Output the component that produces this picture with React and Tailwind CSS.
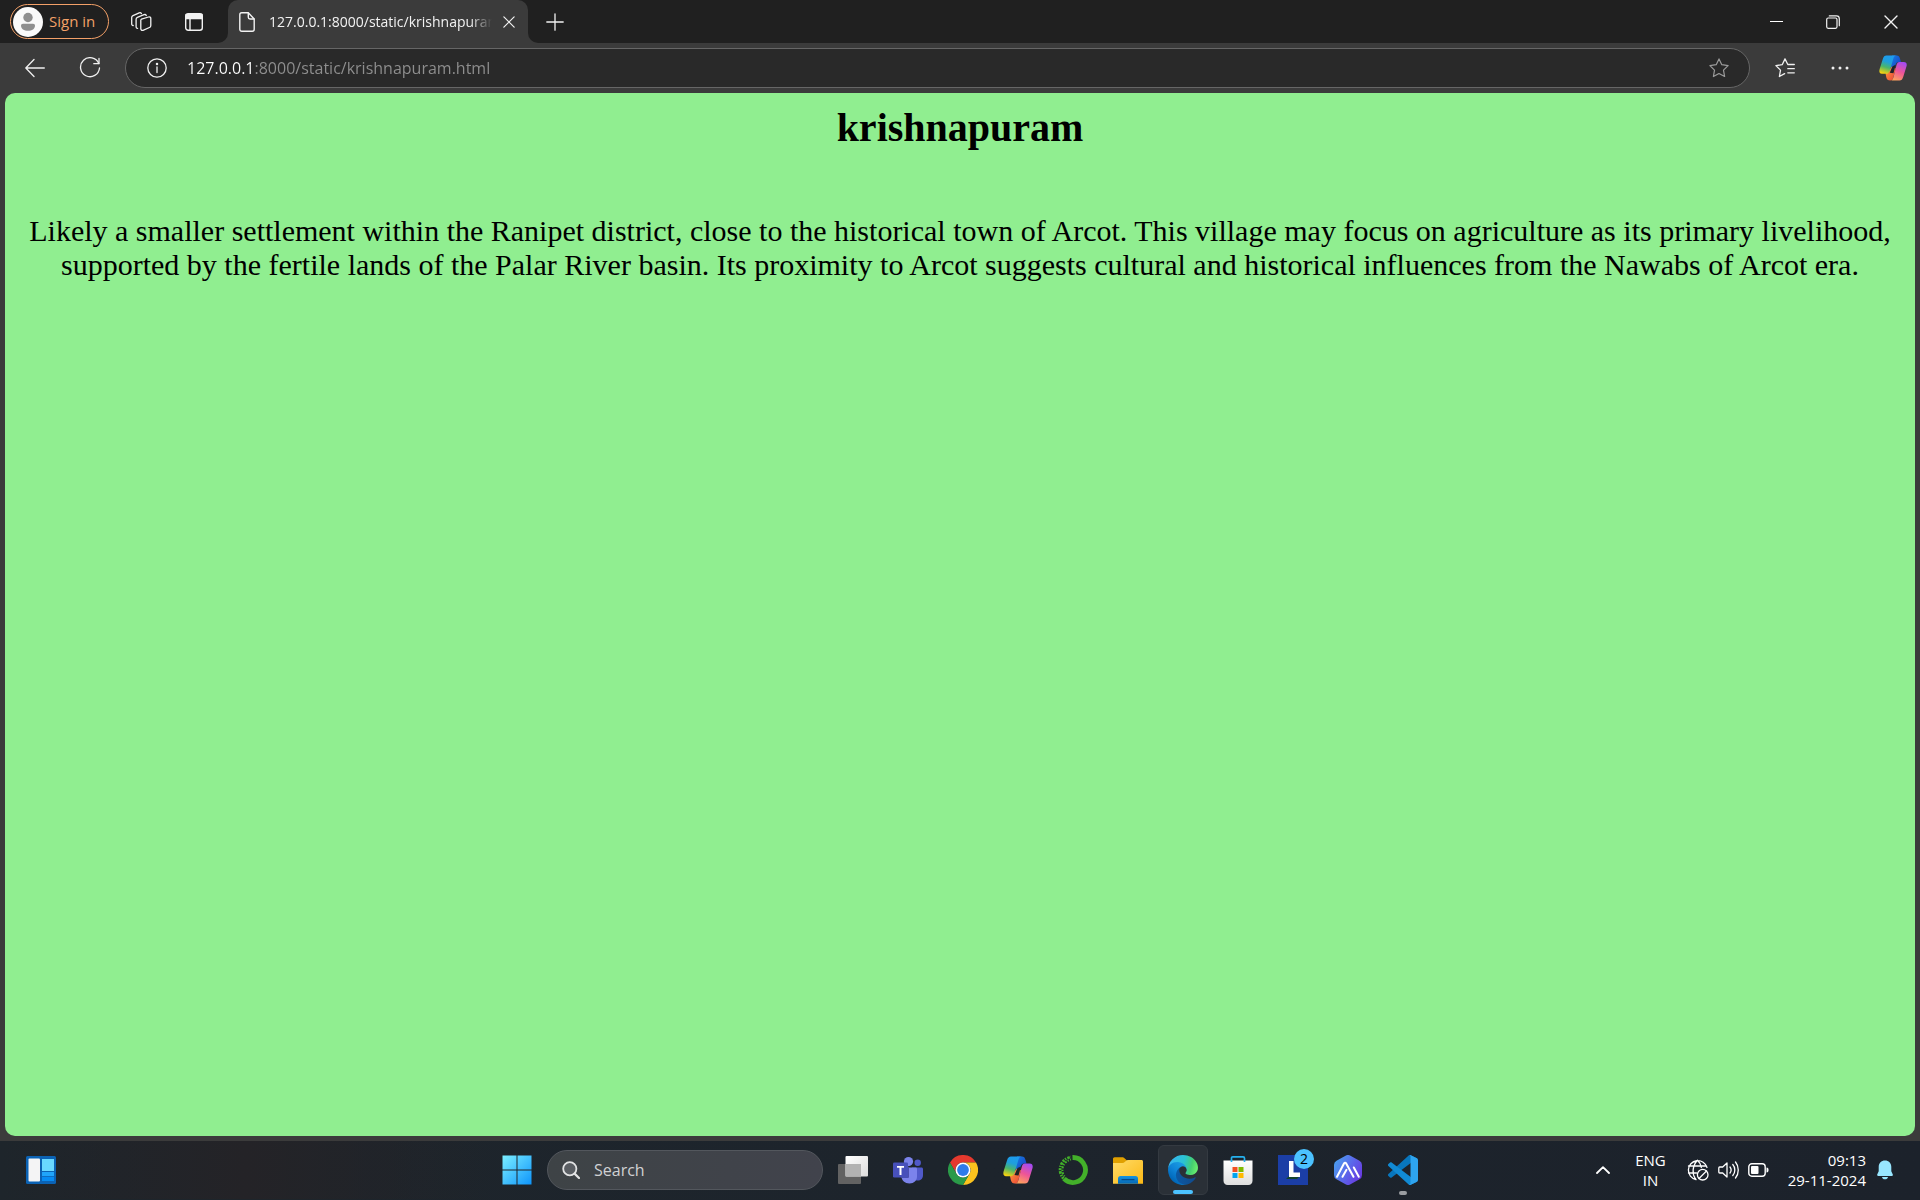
import React from "react";

const line = {
  fill: "none",
  stroke: "currentColor",
  strokeLinecap: "round",
  strokeLinejoin: "round",
};

/* ---------- browser icons ---------- */

function Avatar() {
  return (
    <svg className="size-[30px] shrink-0" viewBox="0 0 30 30" aria-hidden="true">
      <circle cx="15" cy="15" r="15" fill="#fafafa" />
      <circle cx="15" cy="10.5" r="4.7" fill="#8f8f8f" />
      <path d="M10 16.7h10c1.300 0 2 .9 2 2 0 3.100-3 5-7 5s-7-1.900-7-5c0-1.100.7-2 2-2Z" fill="#8f8f8f" />
    </svg>
  );
}

function WorkspacesIcon() {
  return (
    <svg className="size-[22px]" viewBox="0 0 22 22" strokeWidth="1.3" aria-hidden="true" {...line}>
      <path d="M11.500 8.200 18.500 6c1.200-.4 2.300.3 2.300 1.500v7c0 1-.5 1.700-1.400 2L13 19.300c-1.200.4-2.200-.3-2.200-1.500V9.300c0-.5.2-.9.700-1.100Z" />
      <path d="M7.600 17.300c-1 .1-1.500-.6-1.500-1.500V8.200c0-.9.400-1.500 1.300-1.900l6.600-2.600c1-.4 1.900 0 2.300.8" />
      <path d="M3.200 14.500c-.9.100-1.500-.6-1.500-1.500V6.500c0-.9.400-1.500 1.300-1.900l6.200-2.700c.9-.4 1.800 0 2.200.7" />
    </svg>
  );
}

function TabActionsIcon() {
  return (
    <svg className="size-5" viewBox="0 0 20 20" strokeWidth="1.400" aria-hidden="true" {...line}>
      <rect x="1.700" y="1.700" width="16.600" height="16.600" rx="2.500" />
      <path d="M2 2.500h16v4H2z" fill="currentColor" />
      <path d="M6 7v11" />
    </svg>
  );
}

function PageIcon() {
  return (
    <svg className="h-5 w-4 shrink-0" viewBox="0 0 16 20" strokeWidth="1.400" aria-hidden="true" {...line}>
      <path d="M2.700.8h6.600L15.200 7v10.300c0 1-.8 1.900-1.900 1.900H2.700c-1 0-1.900-.8-1.900-1.900V2.700C.8 1.600 1.600.8 2.700.8Z" />
      <path d="M9.300 1v4.300c0 1 .6 1.700 1.700 1.700h4" />
    </svg>
  );
}

function XIcon({ className }) {
  return (
    <svg className={className} viewBox="0 0 14 14" strokeWidth="1.400" aria-hidden="true" {...line}>
      <path d="m1 1 12 12M13 1 1 13" />
    </svg>
  );
}

function PlusIcon() {
  return (
    <svg className="size-[18px]" viewBox="0 0 18 18" strokeWidth="1.300" aria-hidden="true" {...line}>
      <path d="M9 .8v16.400M.8 9h16.400" />
    </svg>
  );
}

function RestoreIcon() {
  return (
    <svg className="size-[14px]" viewBox="0 0 14 14" strokeWidth="1.200" aria-hidden="true" {...line}>
      <rect x=".7" y="3" width="10.300" height="10.300" rx="1.500" />
      <path d="M3.300.9h7.200c1.700 0 2.800 1.100 2.800 2.800v7" />
    </svg>
  );
}

function BackIcon() {
  return (
    <svg className="size-5" viewBox="0 0 20 20" strokeWidth="1.300" aria-hidden="true" {...line}>
      <path d="M19.300 10H.8M9 1.500.8 10 9 18.500" />
    </svg>
  );
}

function ReloadIcon() {
  return (
    <svg className="size-[22px]" viewBox="0 0 22 22" strokeWidth="1.300" aria-hidden="true" {...line}>
      <path d="M19.800 6.500A9.500 9.500 0 1 0 20.500 11" />
      <path d="M20 1.500v5.200h-5.200" />
    </svg>
  );
}

function InfoIcon() {
  return (
    <svg className="size-5" viewBox="0 0 20 20" strokeWidth="1.300" aria-hidden="true" {...line}>
      <circle cx="10" cy="10" r="9.200" />
      <path d="M10 9v5.500" />
      <circle cx="10" cy="6" r=".6" fill="currentColor" />
    </svg>
  );
}

function StarIcon() {
  return (
    <svg className="size-5" viewBox="0 0 20 20" strokeWidth="1.200" aria-hidden="true" {...line}>
      <path d="m10 .9 2.800 5.800 6.300.9-4.600 4.500 1.100 6.400-5.600-3-5.600 3 1.100-6.400L.9 7.600l6.300-.9Z" />
    </svg>
  );
}

function FavoritesIcon() {
  return (
    <svg className="size-5" viewBox="0 0 20 20" strokeWidth="1.300" aria-hidden="true" {...line}>
      <path d="M19.300 6.500h-6.500L10 .9 7.200 6.700l-6.300.9 4.600 4.500-1.100 6.400 5.200-2.900M12.800 10.700h6.500M12.800 14.800h6.500" />
    </svg>
  );
}

function DotsIcon() {
  return (
    <svg className="h-1 w-[18px]" viewBox="0 0 18 4" fill="currentColor" aria-hidden="true">
      <circle cx="2" cy="2" r="1.500" />
      <circle cx="9" cy="2" r="1.500" />
      <circle cx="16" cy="2" r="1.500" />
    </svg>
  );
}

function CopilotLogo({ id, className }) {
  return (
    <svg className={className} viewBox="0 0 30 29" aria-hidden="true">
      <defs>
        <linearGradient id={`${id}-a`} x1=".6" y1="0" x2=".3" y2="1">
          <stop offset="0" stopColor="#1d9bf0" />
          <stop offset=".35" stopColor="#1f9fdc" />
          <stop offset=".65" stopColor="#4bb66a" />
          <stop offset="1" stopColor="#f6d20f" />
        </linearGradient>
        <linearGradient id={`${id}-b`} x1=".7" y1="0" x2=".3" y2="1">
          <stop offset="0" stopColor="#a44bf2" />
          <stop offset=".5" stopColor="#ee5597" />
          <stop offset="1" stopColor="#ffa35c" />
        </linearGradient>
        <linearGradient id={`${id}-c`} x1="0" y1="0" x2="1" y2="1">
          <stop offset="0" stopColor="#1a7fe0" />
          <stop offset="1" stopColor="#1437c4" />
        </linearGradient>
        <linearGradient id={`${id}-d`} x1="0" y1="0" x2="1" y2="1">
          <stop offset="0" stopColor="#ffa13c" />
          <stop offset="1" stopColor="#ea3e38" />
        </linearGradient>
      </defs>
      <path d="M14 1h5c2 0 2.800 1 3.500 3.500l1 3.500H21c-1.700 0-2.600 1-3.200 3L16 17l-3.500-3Z" fill={`url(#${id}-c)`} />
      <path d="M7 20.500 14 13l4 2-2.500 9c-.7 3-1.500 4-3.500 4-2.500 0-3.500-1-4.200-3.500Z" fill={`url(#${id}-d)`} />
      <path d="M14.500 12.500 18 11l-2.500 9-4-.5Z" fill="#1f2229" />
      <path d="M8 1h11c-2 0-3 1-3.700 3.500L12 16c-1 3.300-2 4.700-4.500 4.700H3C.4 20.700-.1 18.500.7 15.500L4 5c.9-3 2-4 4-4Z" fill={`url(#${id}-a)`} />
      <path d="M22 8h4.500c3 0 3.700 2 2.900 5L26 24c-1 3-2 4-4 4H12c2 0 2.800-1.200 3.500-3.700l3.300-13C19.500 9 20.200 8 22 8Z" fill={`url(#${id}-b)`} />
    </svg>
  );
}

/* ---------- taskbar icons ---------- */

function WidgetsIcon() {
  return (
    <svg className="h-7 w-[30px]" viewBox="0 0 30 28" aria-hidden="true">
      <rect width="30" height="28" rx="1.500" fill="#0b62b4" />
      <rect x="2.500" y="2.500" width="11.500" height="23" rx="1" fill="#f4f4f5" />
      <path d="M16 3h12v12H16z" fill="#69d8ff" />
      <path d="M16 16h12v4.200H16z" fill="#20a5fa" />
      <path d="M16 21h12v4H16z" fill="#078bf2" />
    </svg>
  );
}

function StartIcon() {
  return (
    <svg className="size-[30px]" viewBox="0 0 30 30" aria-hidden="true">
      <defs>
        <linearGradient id="start" gradientUnits="userSpaceOnUse" x1="0" y1="0" x2="30" y2="30">
          <stop offset="0" stopColor="#7df0ff" />
          <stop offset="1" stopColor="#0c93fb" />
        </linearGradient>
      </defs>
      <path d="M.5.500h14v14H.5zM15.500.500h14v14h-14zM.5 15.500h14v14H.5zM15.500 15.500h14v14h-14z" fill="url(#start)" />
    </svg>
  );
}

function SearchIcon() {
  return (
    <svg className="size-[18px] text-[#e2e3e4]" viewBox="0 0 18 18" aria-hidden="true">
      <circle cx="7.800" cy="7.800" r="6.600" fill="#5a5e63" stroke="currentColor" strokeWidth="1.800" />
      <path d="m12.600 12.600 4.400 4.400" stroke="currentColor" strokeWidth="2.200" strokeLinecap="round" />
    </svg>
  );
}

function TaskViewIcon() {
  return (
    <svg className="size-[30px]" viewBox="0 0 30 30" aria-hidden="true">
      <defs>
        <linearGradient id="tv" x1="0" y1="0" x2="1" y2="1">
          <stop offset="0" stopColor="#fff" />
          <stop offset="1" stopColor="#dcdcdc" />
        </linearGradient>
      </defs>
      <rect x="0" y="9" width="23" height="20" rx="1" fill="#626262" />
      <rect x="7.500" y="1" width="22.500" height="20.500" rx="1" fill="url(#tv)" />
      <path d="M7.500 9H23v12.500H7.500z" fill="#b2b2b2" />
    </svg>
  );
}

function TeamsIcon() {
  return (
    <svg className="size-[30px]" viewBox="0 0 30 30" aria-hidden="true">
      <circle cx="24.700" cy="7.700" r="3.200" fill="#5059c9" />
      <path d="M19 12.500h9.500c.9 0 1.500.6 1.500 1.500v6c0 4-2.500 5.500-5 5.500-3.500 0-5.500-2-5.500-5Z" fill="#5059c9" />
      <circle cx="15.500" cy="6.600" r="4.600" fill="#7b83eb" />
      <path d="M8 12.500h14.500c1 0 1.500.6 1.500 1.500v7.500c0 4-3 7-7.500 7S8.500 25.500 8.500 21.500Z" fill="#7b83eb" />
      <path d="M8.500 12.500H16v9c0 1-.5 1.500-1.500 1.500H8.700Z" fill="#4a50ad" />
      <rect x="0" y="7.500" width="15" height="15" rx="1.300" fill="#4750ba" />
      <path d="M4 11h7v1.700H8.500v7.300h-2v-7.300H4z" fill="#fff" />
    </svg>
  );
}

function ChromeIcon() {
  return (
    <svg className="size-[30px]" viewBox="0 0 30 30" aria-hidden="true">
      <path d="M2 7.500a15 15 0 0 1 26 0H15a7.500 7.500 0 0 0-6.500 11.250Z" fill="#e5392e" />
      <path d="M28 7.500A15 15 0 0 1 15 30l6.500-11.250A7.500 7.500 0 0 0 15 7.500Z" fill="#fcc31e" />
      <path d="M15 30A15 15 0 0 1 2 7.500l6.500 11.250a7.500 7.500 0 0 0 13 0Z" fill="#2a9a48" />
      <circle cx="15" cy="15" r="7.500" fill="#fff" />
      <circle cx="15" cy="15" r="5.900" fill="#2f7bea" />
    </svg>
  );
}

function AnacondaIcon() {
  return (
    <svg className="size-[30px]" viewBox="0 0 30 30" fill="none" stroke="#43b02a" aria-hidden="true">
      <path d="M14.500 2.500a12.500 12.500 0 1 1-8.500 21.200" strokeWidth="4.800" />
      <path d="M5.500 23.500A12.900 12.900 0 0 1 13 2" strokeWidth="2.800" strokeDasharray="2 1 1.300 1.200 2.600 1" />
      <path d="M6.500 21.500A10.700 10.700 0 0 1 13 4.600" strokeWidth="2" strokeDasharray="1.200 1.500 2 1.200" />
    </svg>
  );
}

function ExplorerIcon() {
  return (
    <svg className="size-[30px]" viewBox="0 0 30 30" aria-hidden="true">
      <defs>
        <linearGradient id="folder" x1="0" y1="0" x2="1" y2="1">
          <stop offset="0" stopColor="#ffdb68" />
          <stop offset="1" stopColor="#fbb915" />
        </linearGradient>
        <linearGradient id="tray" x1="0" y1="0" x2="0" y2="1">
          <stop offset="0" stopColor="#1593df" />
          <stop offset="1" stopColor="#0568b5" />
        </linearGradient>
      </defs>
      <path d="M0 4c0-1 .6-1.700 1.700-1.700h7.500c1 0 1.600.3 2.300 1L14 5.500l-2 4H0Z" fill="#e0a000" />
      <path d="M0 8h9.500c1 0 1.600-.3 2.200-.9l1.200-1.200c.6-.6 1.200-.9 2.100-.9h13.400c1 0 1.600.7 1.600 1.700v22H0Z" fill="url(#folder)" />
      <path d="M5 28.700v-5.200c0-1.600.9-2.500 2.500-2.500h15c1.600 0 2.500.9 2.500 2.500v5.200Z" fill="url(#tray)" />
      <path d="M9 24.700h12" stroke="#064a88" strokeWidth="1.200" strokeLinecap="round" />
    </svg>
  );
}

function EdgeIcon() {
  return (
    <svg className="size-[30px]" viewBox="0 0 256 256" aria-hidden="true">
      <defs>
        <linearGradient id="edge-a" x1="63" y1="177" x2="242" y2="177" gradientUnits="userSpaceOnUse">
          <stop offset="0" stopColor="#0c59a4" />
          <stop offset="1" stopColor="#114a8b" />
        </linearGradient>
        <linearGradient id="edge-b" x1="157" y1="100" x2="46" y2="222" gradientUnits="userSpaceOnUse">
          <stop offset="0" stopColor="#1b9de2" />
          <stop offset=".5" stopColor="#0f85d8" />
          <stop offset="1" stopColor="#0067b8" />
        </linearGradient>
        <linearGradient id="edge-c" x1="10" y1="70" x2="240" y2="130" gradientUnits="userSpaceOnUse">
          <stop offset="0" stopColor="#35b5f1" />
          <stop offset=".5" stopColor="#2bc3d2" />
          <stop offset=".8" stopColor="#45cf70" />
          <stop offset="1" stopColor="#66eb6e" />
        </linearGradient>
      </defs>
      <path fill="url(#edge-a)" d="M231 190.500c-3.400 1.800-6.900 3.400-10.500 4.700a101.500 101.500 0 0 1-35.900 6.500c-47.300 0-88.500-32.500-88.500-74.400 0-11.500 6.400-21.900 16.400-27.400-42.800 1.800-53.800 46.400-53.800 72.500 0 74 68.100 81.400 82.800 81.400 7.900 0 19.800-2.300 27-4.600l1.300-.4a128.300 128.300 0 0 0 66.600-52.800 4 4 0 0 0-5.400-5.500Z" />
      <path fill="url(#edge-b)" d="M105.700 241.400a79.200 79.200 0 0 1-22.700-21.300 80.700 80.700 0 0 1 29.500-120c3.200-1.500 8.400-4.100 15.500-4a32.400 32.400 0 0 1 25.700 13 31.900 31.900 0 0 1 6.300 18.700c0-.2 24.500-79.600-80-79.600-43.900 0-80 41.700-80 78.200a130.200 130.200 0 0 0 12.100 56 128 128 0 0 0 156.400 67 75.600 75.600 0 0 1-62.800-8Z" />
      <path fill="url(#edge-c)" d="M152.300 148.900c-.9 1-3.400 2.500-3.400 5.600 0 2.600 1.700 5.200 4.800 7.300 14.300 10 41.400 8.600 41.500 8.600 10.700 0 21.100-2.900 30.300-8.300a61.400 61.400 0 0 0 30.400-52.900c.3-22.400-8-37.300-11.300-43.900C223.500 23.900 177.700 0 128 0A128 128 0 0 0 0 126.200c.5-36.500 36.800-66 80-66 3.500 0 23.500.3 42 10.100 16.300 8.600 24.900 19 30.800 29.200 6.200 10.700 7.300 24.100 7.300 29.500 0 5.300-2.700 13.300-7.800 19.900Z" />
    </svg>
  );
}

function StoreIcon() {
  return (
    <svg className="size-[30px]" viewBox="0 0 30 30" aria-hidden="true">
      <defs>
        <linearGradient id="bag" x1="0" y1="0" x2="0" y2="1">
          <stop offset="0" stopColor="#fff" />
          <stop offset="1" stopColor="#dedede" />
        </linearGradient>
      </defs>
      <path d="M.5 5.500h29v20.300c0 2.600-1.600 4.200-4.200 4.200H4.700C2.100 30 .5 28.400.5 25.800Z" fill="url(#bag)" />
      <path d="M8.500 7V3.200c0-.9.500-1.400 1.400-1.400h10.200c.9 0 1.400.5 1.400 1.400V7" fill="none" stroke="#25b1ee" strokeWidth="1.700" />
      <path d="M9.500 12h5v5h-5z" fill="#f25022" />
      <path d="M15.500 12h5v5h-5z" fill="#7fba00" />
      <path d="M9.500 18h5v5h-5z" fill="#00a4ef" />
      <path d="M15.500 18h5v5h-5z" fill="#ffb900" />
    </svg>
  );
}

function LetterLIcon() {
  return (
    <svg className="size-[30px]" viewBox="0 0 30 30" aria-hidden="true">
      <path d="M0 0h30v30H0z" fill="#1b3ea6" />
      <path d="m11 21-3 3h11l3-3Z" fill="#14442f" />
      <path d="M11 6h4.500v11.500H22V22H11z" fill="#fff" />
    </svg>
  );
}

function HexIcon() {
  return (
    <svg className="size-[30px]" viewBox="0 0 30 30" aria-hidden="true">
      <defs>
        <linearGradient id="hex" x1="0" y1=".2" x2="1" y2=".8">
          <stop offset="0" stopColor="#4aa0ee" />
          <stop offset=".5" stopColor="#5b67ea" />
          <stop offset="1" stopColor="#6a35e0" />
        </linearGradient>
      </defs>
      <path d="M12.500.7a5 5 0 0 1 5 0l9 5.100a5 5 0 0 1 2.500 4.400v9.600a5 5 0 0 1-2.500 4.400l-9 5.100a5 5 0 0 1-5 0l-9-5.100A5 5 0 0 1 1 19.800v-9.600a5 5 0 0 1 2.500-4.400Z" fill="url(#hex)" />
      <path d="m4 21.800 7-13.300c.6-1.100 1.600-1.100 2.200 0l7.300 13.300M9.500 21.800l4-7M20.800 12.500l5 9.300" fill="none" stroke="#fff" strokeWidth="2" strokeLinecap="round" strokeLinejoin="round" />
    </svg>
  );
}

function CodeIcon() {
  return (
    <svg className="size-[30px]" viewBox="0 0 100 100" aria-hidden="true">
      <path fill="#0876bd" d="M96.460 10.800 75.860.880C73.470-.270 70.620.210 68.750 2.080L1.300 63.580c-1.820 1.660-1.820 4.510 0 6.160l5.510 5.010c1.490 1.350 3.720 1.450 5.320.240L93.360 13.370c2.730-2.070 6.640-.120 6.640 3.300v-.240c0-2.400-1.380-4.590-3.540-5.630Z" />
      <path fill="#118ad4" d="m96.460 89.200-20.600 9.920c-2.390 1.150-5.240.670-7.110-1.200L1.300 36.420c-1.820-1.660-1.820-4.510 0-6.170l5.510-5c1.490-1.350 3.720-1.450 5.320-.240l81.230 61.620c2.730 2.070 6.640.120 6.640-3.300v.240c0 2.400-1.380 4.590-3.540 5.630Z" />
      <path fill="#2ea4ef" d="M75.860 99.130c-2.390 1.150-5.240.660-7.110-1.210C71.060 100.220 75 98.590 75 95.330V4.670c0-3.260-3.940-4.890-6.250-2.590C70.620.210 73.470-.270 75.860.870l20.600 9.910c2.160 1.040 3.540 3.230 3.540 5.630v67.180c0 2.400-1.380 4.590-3.540 5.630Z" />
    </svg>
  );
}

function ChevronUpIcon() {
  return (
    <svg className="h-2 w-[14px]" viewBox="0 0 14 8" strokeWidth="1.800" aria-hidden="true" {...line}>
      <path d="m1 7 6-5.800L13 7" />
    </svg>
  );
}

function GlobeIcon() {
  return (
    <svg className="size-[22px]" viewBox="0 0 22 22" strokeWidth="1.300" aria-hidden="true" {...line}>
      <path d="M9 20.500A9.500 9.500 0 1 1 20 8.500M1.500 7h18M1.500 14h8M8.500 20C5 15 5 7 10.500 1.200 13 3.500 14 6 14.300 8.500" />
      <circle cx="15.700" cy="15.700" r="5.300" />
      <path d="m12 19.500 7.500-7.500" />
    </svg>
  );
}

function SpeakerIcon() {
  return (
    <svg className="h-[18px] w-[21px]" viewBox="0 0 21 18" strokeWidth="1.300" aria-hidden="true" {...line}>
      <path d="M1.700 6h3L9 2v14l-4.300-4h-3c-.5 0-.9-.4-.9-.9V6.900c0-.5.4-.9.900-.9ZM12 6c1.300 1.700 1.300 4.300 0 6M14.800 3.500c2.700 3 2.700 8 0 11M17.500 1c3.700 4.500 3.700 11.500 0 16" />
    </svg>
  );
}

function BatteryIcon() {
  return (
    <svg className="h-[14px] w-[21px]" viewBox="0 0 21 14" aria-hidden="true">
      <rect x=".8" y=".8" width="16.400" height="12.400" rx="3" strokeWidth="1.400" {...line} />
      <rect x="3" y="3" width="7.500" height="8" rx="1" fill="currentColor" />
      <path d="M18.500 4.500c1.600 0 2 1 2 2.500s-.4 2.500-2 2.500Z" fill="currentColor" />
    </svg>
  );
}

function BellIcon() {
  return (
    <svg className="h-5 w-4" viewBox="0 0 16 20" fill="#98e6fe" aria-hidden="true">
      <path d="M8 .5c3.700 0 6.300 2.700 6.300 6.300v4.500l1.500 3.300c.3.700-.1 1.400-.9 1.400H1.100c-.8 0-1.200-.7-.9-1.400l1.500-3.300V6.800C1.700 3.200 4.300.5 8 .5ZM5 17h6c-.3 1.500-1.400 2.300-3 2.300S5.300 18.500 5 17Z" />
    </svg>
  );
}

/* ---------- page ---------- */

const apps = [
  { name: "Task View", icon: <TaskViewIcon /> },
  { name: "Microsoft Teams", icon: <TeamsIcon /> },
  { name: "Google Chrome", icon: <ChromeIcon /> },
  { name: "Copilot", icon: <CopilotLogo id="cp-task" className="size-[30px]" /> },
  { name: "Anaconda Navigator", icon: <AnacondaIcon /> },
  { name: "File Explorer", icon: <ExplorerIcon /> },
  { name: "Microsoft Edge", icon: <EdgeIcon />, active: true },
  { name: "Microsoft Store", icon: <StoreIcon /> },
  { name: "L", icon: <LetterLIcon />, badge: "2" },
  { name: "Assistant", icon: <HexIcon /> },
  { name: "Visual Studio Code", icon: <CodeIcon />, running: true },
];

function AppButton({ app }) {
  return (
    <button
      type="button"
      aria-label={app.name}
      className={
        app.active
          ? "relative flex size-[50px] items-center justify-center rounded-md border border-[#343a41] bg-[#2a3037]"
          : "relative flex size-[50px] items-center justify-center"
      }
    >
      {app.icon}
      {app.badge && (
        <span className="absolute top-1 right-1 flex size-5 items-center justify-center rounded-full bg-[#4cc2ff] text-sm text-black">
          {app.badge}
        </span>
      )}
      {app.active && <span className="absolute bottom-0 h-1 w-5 rounded-full bg-[#4cc2ff]" />}
      {app.running && <span className="absolute bottom-0 h-1 w-2 rounded-full bg-[#9a9da1]" />}
    </button>
  );
}

function TabStrip() {
  return (
    <div className="flex h-[43px] items-center bg-[#202020] text-[#f2f2f2]">
      <button
        type="button"
        className="ml-[10px] flex h-[35px] w-[99px] items-center gap-[6px] rounded-full border border-[#f3a068] pl-[2px] text-[15px] whitespace-nowrap text-[#f3a068]"
      >
        <Avatar />
        Sign in
      </button>
      <button type="button" aria-label="Workspaces" className="ml-[21px] p-0">
        <WorkspacesIcon />
      </button>
      <button type="button" aria-label="Tab actions" className="ml-8">
        <TabActionsIcon />
      </button>
      <div className="ml-[14px] size-[10px] self-end bg-[#3b3b3b]">
        <div className="size-full rounded-br-[10px] bg-[#202020]" />
      </div>
      <div className="flex h-full w-[300px] items-center rounded-t-[10px] bg-[#3b3b3b] pl-[11px]">
        <PageIcon />
        <span className="ml-[14px] w-[223px] overflow-hidden text-sm whitespace-nowrap mask-r-from-90% mask-r-to-100%">
          127.0.0.1:8000/static/krishnapuram.html
        </span>
        <button type="button" aria-label="Close tab" className="ml-[11px]">
          <XIcon className="size-3" />
        </button>
      </div>
      <div className="size-[10px] self-end bg-[#3b3b3b]">
        <div className="size-full rounded-bl-[10px] bg-[#202020]" />
      </div>
      <button type="button" aria-label="New tab" className="ml-2">
        <PlusIcon />
      </button>
      <div className="ml-auto flex h-full items-center">
        <button type="button" aria-label="Minimize" className="flex h-full w-14 items-center justify-center">
          <span className="h-px w-[13px] bg-white" />
        </button>
        <button type="button" aria-label="Restore" className="flex h-full w-[58px] items-center justify-center">
          <RestoreIcon />
        </button>
        <button type="button" aria-label="Close" className="flex h-full w-[58px] items-center justify-center">
          <XIcon className="size-[14px]" />
        </button>
      </div>
    </div>
  );
}

function Toolbar() {
  return (
    <div className="flex h-[50px] items-center bg-[#3b3b3b] text-[#f0f0f0]">
      <button type="button" aria-label="Back" className="ml-[25px]">
        <BackIcon />
      </button>
      <button type="button" aria-label="Refresh" className="ml-[34px]">
        <ReloadIcon />
      </button>
      <div className="ml-6 flex h-10 flex-1 items-center rounded-full border border-[#666] bg-[#292929] pr-5 pl-[21px]">
        <button type="button" aria-label="Site information">
          <InfoIcon />
        </button>
        <input
          type="text"
          aria-label="Address"
          defaultValue="127.0.0.1:8000/static/krishnapuram.html"
          className="ml-5 min-w-0 flex-1 bg-linear-to-r from-white from-[67px] to-[#8f8f8f] to-[67px] bg-clip-text text-base text-transparent outline-none"
        />
        <button type="button" aria-label="Add to favorites" className="text-[#9b9b9b]">
          <StarIcon />
        </button>
      </div>
      <button type="button" aria-label="Favorites" className="ml-[25px]">
        <FavoritesIcon />
      </button>
      <button type="button" aria-label="Settings and more" className="ml-9">
        <DotsIcon />
      </button>
      <button type="button" aria-label="Copilot" className="mr-[13px] ml-[30px]">
        <CopilotLogo id="cp-bar" className="size-7" />
      </button>
    </div>
  );
}

function Taskbar() {
  return (
    <footer className="grid h-[59px] grid-cols-[1fr_auto_1fr] items-center bg-linear-to-r from-[#1e252b] via-[#1d242c] to-[#1c222b] pb-px text-white">
      <div className="flex items-center self-stretch bg-linear-to-r from-transparent via-[#242327] to-transparent pl-[26px]">
        <button type="button" aria-label="Widgets">
          <WidgetsIcon />
        </button>
      </div>
      <div className="flex items-center gap-[5px]">
        <button type="button" aria-label="Start" className="flex size-[50px] items-center justify-center">
          <StartIcon />
        </button>
        <label className="flex h-10 w-[276px] items-center rounded-full border border-[#53575d] bg-linear-to-r from-[#3e4346] to-[#41434c] pl-[14px]">
          <SearchIcon />
          <input
            type="text"
            aria-label="Search"
            placeholder="Search"
            className="ml-[14px] min-w-0 flex-1 bg-transparent text-base outline-none placeholder:text-[#d0d1d3]"
          />
        </label>
        {apps.map((app) => (
          <AppButton key={app.name} app={app} />
        ))}
      </div>
      <div className="flex items-center justify-end pr-[27px] text-[15px] leading-5">
        <button type="button" aria-label="Show hidden icons">
          <ChevronUpIcon />
        </button>
        <button type="button" className="ml-[25px] text-center">
          ENG
          <br />
          IN
        </button>
        <button type="button" aria-label="Network, volume and battery" className="ml-[21px] flex items-center gap-[9px]">
          <GlobeIcon />
          <SpeakerIcon />
          <BatteryIcon />
        </button>
        <button type="button" className="ml-[19px] text-right">
          09:13
          <br />
          29-11-2024
        </button>
        <button type="button" aria-label="Notifications" className="ml-[11px]">
          <BellIcon />
        </button>
      </div>
    </footer>
  );
}

export default function App() {
  return (
    <div className="flex min-h-screen flex-col bg-[#3b3b3b] font-['Open_Sans','Noto_Sans',sans-serif]">
      <header>
        <TabStrip />
        <Toolbar />
      </header>
      <main className="mx-[5px] mb-[5px] flex-1 rounded-[10px] bg-[#90ee90] px-[10px] pt-3 text-center font-['Liberation_Serif',serif] text-black">
        <h1 className="text-[40px] leading-[46px] font-bold">krishnapuram</h1>
        <p className="mt-[63px] text-[30px] leading-[34px]">
          Likely a smaller settlement within the Ranipet district, close to the historical town of Arcot. This village
          may focus on agriculture as its primary livelihood, supported by the fertile lands of the Palar River basin.
          Its proximity to Arcot suggests cultural and historical influences from the Nawabs of Arcot era.
        </p>
      </main>
      <Taskbar />
    </div>
  );
}
